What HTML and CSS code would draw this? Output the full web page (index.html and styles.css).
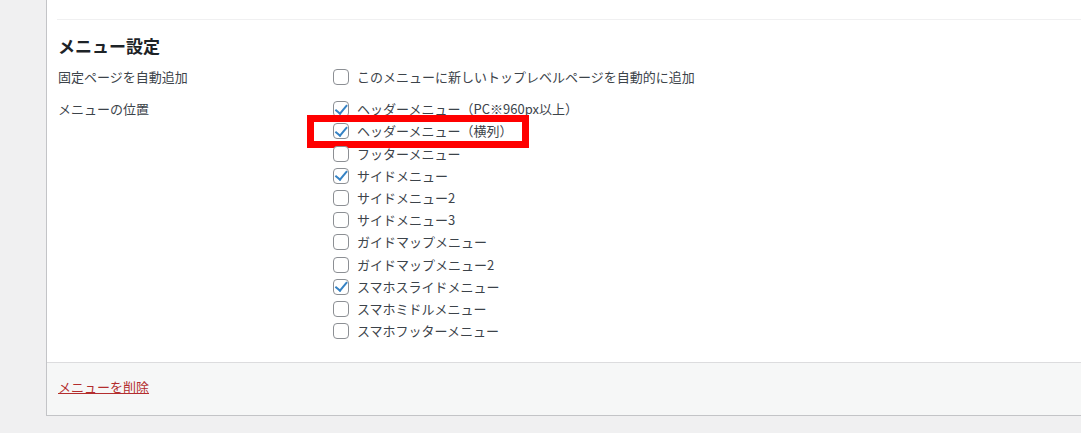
FILE: index.html
```html
<!DOCTYPE html>
<html lang="ja">
<head>
    <meta charset="UTF-8">
    <title>メニュー設定</title>
    <link rel="stylesheet" href="styles.css">
</head>
<body>
    <div class="menu-panel">
        <div class="menu-body">
            <div class="menu-settings">
                <h3>メニュー設定</h3>

                <div class="setting-row auto-add">
                    <div class="setting-label">固定ページを自動追加</div>
                    <ul class="setting-input">
                        <li><span class="cb"></span>このメニューに新しいトップレベルページを自動的に追加</li>
                    </ul>
                </div>

                <div class="setting-row locations">
                    <div class="setting-label">メニューの位置</div>
                    <ul class="setting-input">
                        <li><span class="cb checked"></span>ヘッダーメニュー（PC※960px以上）</li>
                        <li class="marked"><span class="cb checked"></span>ヘッダーメニュー（横列）<span class="highlight-box"></span></li>
                        <li><span class="cb"></span>フッターメニュー</li>
                        <li><span class="cb checked"></span>サイドメニュー</li>
                        <li><span class="cb"></span>サイドメニュー2</li>
                        <li><span class="cb"></span>サイドメニュー3</li>
                        <li><span class="cb"></span>ガイドマップメニュー</li>
                        <li><span class="cb"></span>ガイドマップメニュー2</li>
                        <li><span class="cb checked"></span>スマホスライドメニュー</li>
                        <li><span class="cb"></span>スマホミドルメニュー</li>
                        <li><span class="cb"></span>スマホフッターメニュー</li>
                    </ul>
                </div>
            </div>
        </div>

        <div class="menu-footer">
            <a href="#" class="delete-link">メニューを削除</a>
        </div>
    </div>
</body>
</html>
```

FILE: styles.css
```css
body {
    margin: 0;
    background: #f0f0f1;
    color: #3c434a;
    font-family: "Noto Sans CJK JP", "Noto Sans", sans-serif;
    font-size: 13px;
    line-height: 22px;
    overflow: hidden;
}

.menu-panel {
    margin-left: 46px;
    background: #fff;
    border-left: 1px solid #c3c4c7;
    border-bottom: 1px solid #c3c4c7;
}

.menu-body {
    padding: 19px 0 20px 10px;
}

.menu-settings {
    border-top: 1px solid #f0f0f1;
    padding-left: 1px;
}

.menu-settings h3 {
    margin: 14px 0 8px;
    font-size: 17px;
    line-height: 24px;
    font-weight: bold;
    color: #1d2327;
}

.setting-row {
    display: flex;
}

.setting-row.locations {
    margin-top: 10px;
}

.setting-label {
    width: 275px;
    flex: none;
}

.setting-input {
    list-style: none;
    margin: 0;
    padding: 0;
}

.setting-input li {
    display: flex;
    align-items: center;
    height: 22.2px;
    white-space: nowrap;
}

.setting-input li.marked {
    position: relative;
}

.cb {
    width: 16px;
    height: 16px;
    box-sizing: border-box;
    border: 1px solid #8c8f94;
    border-radius: 4px;
    background: #fff;
    margin-right: 8px;
    flex: none;
    position: relative;
}

.cb.checked::after {
    content: "";
    position: absolute;
    left: 4px;
    top: -0.5px;
    width: 4.5px;
    height: 9.5px;
    border: solid #3582c4;
    border-width: 0 2.8px 2.8px 0;
    transform: rotate(40deg);
}

.highlight-box {
    position: absolute;
    left: -26px;
    top: -5px;
    width: 222px;
    height: 33px;
    box-sizing: border-box;
    border: 7px solid #ff0000;
}

.menu-footer {
    border-top: 1px solid #dcdcde;
    background: #f6f7f7;
    padding: 13px 11px 17px;
}

.delete-link {
    color: #b32d2e;
    text-decoration: underline;
}
```
